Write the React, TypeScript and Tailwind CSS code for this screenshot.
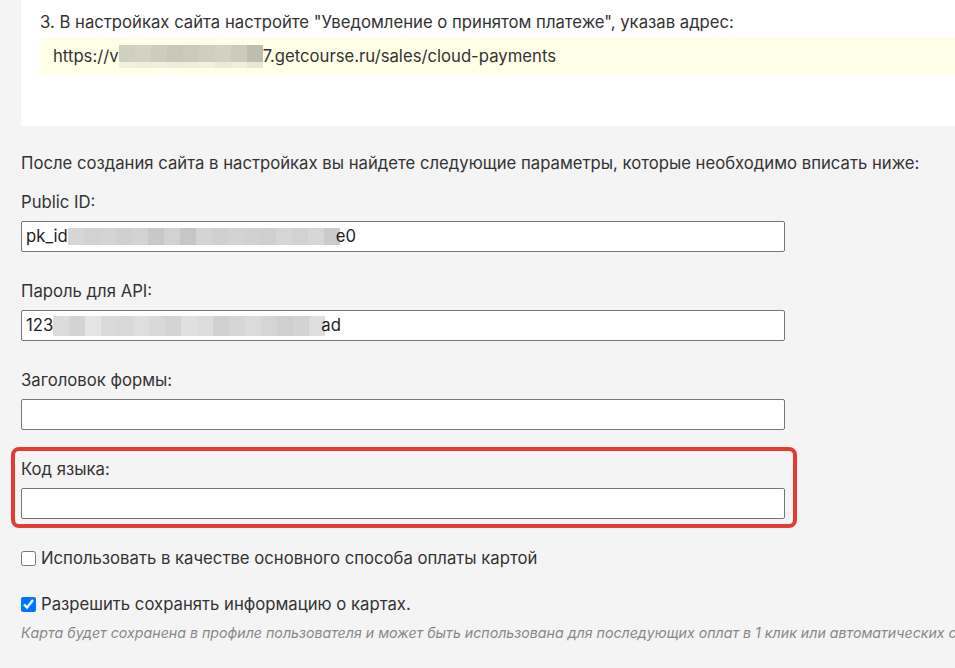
import React from 'react';

const font = { fontFamily: 'Inter, "Noto Sans", sans-serif' };

function Mosaic({ cells, bottom, h = 'h-[17px]', bh = 'h-[6px]' }: { cells: string[]; bottom?: string[]; h?: string; bh?: string }) {
    return (
        <span className="inline-flex flex-col align-middle">
            <span className="flex">
                {cells.map((c, i) => (
                    <span key={i} className={`w-4 ${h}`} style={{ background: c }} />
                ))}
            </span>
            {bottom && (
                <span className="flex">
                    {bottom.map((c, i) => (
                        <span key={i} className={`w-4 ${bh}`} style={{ background: c }} />
                    ))}
                </span>
            )}
        </span>
    );
}

function Field({ label, children }: { label: string; children?: React.ReactNode }) {
    return (
        <div>
            <div className="text-[16.7px] leading-5 text-[#333] mb-[9px]">{label}</div>
            <div className="w-[764px] h-[31px] bg-white border border-[#767676] rounded-[2px] flex items-center pl-[4px] text-[16.7px] text-[#222] overflow-hidden whitespace-nowrap">
                {children}
            </div>
        </div>
    );
}

export default function App() {
    return (
        <div className="min-h-[668px] bg-[#f4f4f4] overflow-hidden w-[955px]" style={font}>
            <div className="ml-[21px] bg-white h-[126px] pt-[12px] pl-[19px]">
                <div className="text-[16.7px] leading-5 text-[#333] whitespace-nowrap">
                    3. В настройках сайта настройте "Уведомление о принятом платеже", указав адрес:
                </div>
                <div className="mt-[6px] h-[37px] bg-[#ffffe8] flex items-center pl-[13px] text-[16.7px] text-[#333] whitespace-nowrap">
                    https://v
                    <Mosaic
                        cells={['#d0d0bf', '#d3d3c3', '#cdcdbd', '#c8c8b8', '#cbcbbb', '#cfcfbf', '#d2d2c2', '#ccccbc', '#bebeb0']}
                        bottom={['#f1f1dd', '#eeeed9', '#f0f0dc', '#ecece0', '#eeeed9', '#f1f1dd', '#eaead5', '#efefdb', '#e8e8d4']}
                    />
                    7.getcourse.ru/sales/cloud-payments
                </div>
            </div>

            <div className="pl-[21px] pt-[27px]">
                <div className="text-[16.7px] leading-5 text-[#333] whitespace-nowrap">
                    После создания сайта в настройках вы найдете следующие параметры, которые необходимо вписать ниже:
                </div>
                <div className="mt-[19px]">
                    <Field label="Public ID:">
                        pk_id
                        <Mosaic
                            cells={['#d6d6d6', '#d2d2d2', '#d4d4d4', '#d0d0d0', '#d3d3d3', '#c8c8c8', '#d2d2d2', '#c6c6c6', '#d4d4d4', '#d0d0d0', '#d3d3d3', '#d1d1d1', '#cfcfcf', '#d6d6d6', '#d2d2d2', '#d7d7d7', '#cbcbcb']}
                        />
                        <span className="-ml-[4px]">e0</span>
                    </Field>
                </div>
                <div className="mt-[29px]">
                    <Field label="Пароль для API:">
                        123
                        <Mosaic
                            h="h-[20px]"
                            cells={['#dcdcdc', '#d3d3d3', '#e4e4e4', '#dadada', '#d8d8d8', '#dedede', '#d9d9d9', '#d4d4d4', '#e0e0e0', '#dddddd', '#d1d1d1', '#d6d6d6', '#dbdbdb', '#d5d5d5', '#cfcfcf', '#d3d3d3', '#dedede']}
                        />
                        <span className="-ml-[4px]">ad</span>
                    </Field>
                </div>
                <div className="mt-[29px]">
                    <Field label="Заголовок формы:" />
                </div>

                <div className="mt-[17px] -ml-[10px] w-[786px] h-[81px] border-4 border-[#e53b31] rounded-[8px] pl-[6px] pt-[8px]">
                    <Field label="Код языка:" />
                </div>

                <label className="mt-[18px] flex items-center gap-[5px] text-[16.7px] text-[#333]">
                    <input type="checkbox" className="w-[15px] h-[15px] m-0" />
                    Использовать в качестве основного способа оплаты картой
                </label>

                <label className="mt-[21px] flex items-center gap-[5px] text-[16.7px] text-[#333]">
                    <input type="checkbox" defaultChecked className="w-[15px] h-[15px] m-0 accent-[#0075ff]" />
                    Разрешить сохранять информацию о картах.
                </label>
                <div className="mt-[5px] text-[14.2px] italic text-[#888] whitespace-nowrap">
                    Карта будет сохранена в профиле пользователя и может быть использована для последующих оплат в 1 клик или автоматических списаний
                </div>
            </div>
        </div>
    );
}
